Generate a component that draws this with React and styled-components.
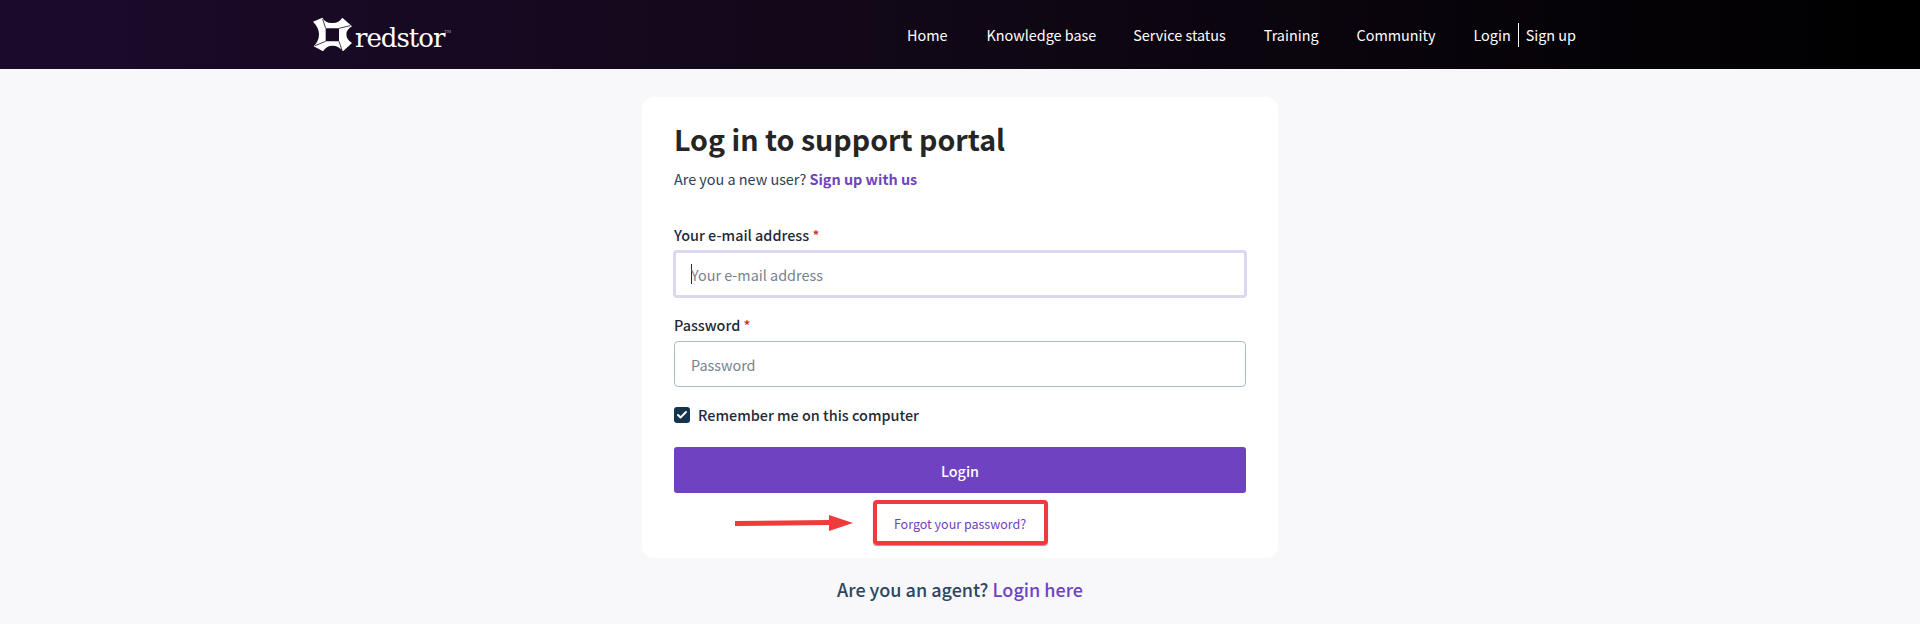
import React from "react";
import styled, { createGlobalStyle } from "styled-components";
import { Check } from "lucide-react";

const FONT = `"Noto Sans CJK SC", "Noto Sans", sans-serif`;

const Global = createGlobalStyle`
  html, body { margin: 0; padding: 0; background: #f8f8fb; }
  body { font-family: ${FONT}; height: 624px; overflow: hidden; }
  * { box-sizing: border-box; }
`;

const Header = styled.header`
  height: 69px;
  background: linear-gradient(90deg, #1c0a2c 0%, #120818 45%, #000 100%);
  display: flex;
  align-items: center;
  justify-content: space-between;
  padding: 0 344px 0 313px;
`;
const Logo = styled.div`
  display: flex;
  align-items: center;
  gap: 3px;
  color: #fff;
`;
const LogoText = styled.span`
  font-family: "DejaVu Serif", "Liberation Serif", serif;
  font-size: 26px;
  line-height: 36px;
  letter-spacing: -1px;
`;
const Trademark = styled.sup`
  font-size: 4px;
  letter-spacing: 0;
  color: #aaa;
  vertical-align: 14px;
`;
const Nav = styled.nav`
  display: flex;
  align-items: center;
  font-size: 14.4px;
  line-height: 24px;
  color: #fff;
`;
const NavLink = styled.a`
  margin-right: ${(p) => p.$gap}px;
`;
const NavRule = styled.span`
  width: 1px;
  height: 24px;
  background: #fff;
  margin: 0 7px;
`;

const Main = styled.main`
  display: flex;
  flex-direction: column;
  align-items: center;
  padding-top: 28px;
`;
const Card = styled.section`
  position: relative;
  width: 636px;
  height: 461px;
  background: #fff;
  border-radius: 12px;
  padding: 22px 32px 0;
`;
const Title = styled.h1`
  margin: 0;
  font-size: 28.6px;
  line-height: 40px;
  font-weight: 700;
  color: #252525;
`;
const Lead = styled.p`
  margin: 8px 0 0;
  font-size: 14.4px;
  line-height: 24px;
  color: #2d3f58;
`;
const Strong = styled.a`
  font-weight: 700;
  color: #6f42c1;
`;
const Field = styled.div`
  margin-top: ${(p) => p.$top}px;
`;
const Label = styled.label`
  display: block;
  font-size: 14.4px;
  line-height: 24px;
  font-weight: 500;
  color: #1f2a37;
  margin-bottom: 4px;
`;
const Star = styled.span`
  color: #d62828;
`;
const InputBox = styled.div`
  margin: ${(p) => (p.$focus ? "-1px -1px 0" : "0")};
  height: ${(p) => (p.$focus ? "48px" : "46px")};
  border-radius: 4px;
  background: #fff;
  border: ${(p) => (p.$focus ? "3px solid #dcd7f0" : "1px solid #adbccb")};
  display: flex;
  align-items: center;
  padding-left: ${(p) => (p.$focus ? "15px" : "16px")};
  font-size: 14.4px;
  color: #77828f;
`;
const Caret = styled.span`
  width: 1px;
  height: 20px;
  background: #12344d;
  margin-right: -1px;
`;
const CheckRow = styled.div`
  display: flex;
  align-items: center;
  gap: 8px;
  margin-top: 16px;
  font-size: 14.4px;
  line-height: 24px;
  font-weight: 500;
  color: #1f2a37;
`;
const CheckBox = styled.span`
  width: 16px;
  height: 16px;
  border-radius: 3px;
  background: #12344d;
  color: #fff;
  display: flex;
  align-items: center;
  justify-content: center;
`;
const Button = styled.button`
  display: block;
  width: 100%;
  height: 46px;
  margin-top: 20px;
  border: 0;
  border-radius: 3px;
  background: #6f42c1;
  color: #fff;
  font-family: ${FONT};
  font-size: 14.4px;
  font-weight: 500;
`;
const Forgot = styled.a`
  display: block;
  margin-top: 21px;
  text-align: center;
  font-size: 12.5px;
  line-height: 20px;
  color: #6f42c1;
`;
const RedBox = styled.div`
  position: absolute;
  left: 231px;
  top: 403px;
  width: 175px;
  height: 45px;
  border: 4px solid #ef3b3b;
  border-radius: 4px;
  box-shadow: 0 1px 1px rgba(0, 0, 0, 0.4);
`;
const Arrow = styled.svg`
  position: absolute;
  left: 93px;
  top: 418px;
`;
const Agent = styled.p`
  margin: 17px 0 0;
  font-size: 18px;
  line-height: 28px;
  font-weight: 500;
  color: #2d4660;
`;
const AgentLink = styled.a`
  color: #6f42c1;
`;

const LogoMark = () => (
  <svg width="39" height="35" viewBox="0 0 117 105">
    <path
      d="M0 14 L28 2 Q38 20 60 18 Q78 18 88 2 L117 28 Q100 38 100 52 Q100 68 117 78 L90 103 Q78 86 58 86 Q40 86 30 103 L2 88 Q18 72 18 52 Q18 32 0 14 Z M38 34 L38 73 L78 73 L78 34 Z"
      fill="#fff"
      fillRule="evenodd"
    />
    <path d="M38 34 L29 6 M78 34 L112 26 M78 73 L87 100 M38 73 L6 86" stroke="#1a0a28" strokeWidth="2.4" fill="none" />
  </svg>
);

const links = [
  ["Home", 39],
  ["Knowledge base", 37],
  ["Service status", 38],
  ["Training", 38],
  ["Community", 38],
];

export default function App() {
  return (
    <>
      <Global />
      <Header>
        <Logo>
          <LogoMark />
          <LogoText>redstor<Trademark>TM</Trademark></LogoText>
        </Logo>
        <Nav>
          {links.map(([t, g]) => (
            <NavLink key={t} $gap={g}>{t}</NavLink>
          ))}
          <span>Login</span>
          <NavRule />
          <span>Sign up</span>
        </Nav>
      </Header>
      <Main>
        <Card>
          <Title>Log in to support portal</Title>
          <Lead>
            Are you a new user? <Strong>Sign up with us</Strong>
          </Lead>
          <Field $top={32}>
            <Label>Your e-mail address <Star>*</Star></Label>
            <InputBox $focus><Caret />Your e-mail address</InputBox>
          </Field>
          <Field $top={15}>
            <Label>Password <Star>*</Star></Label>
            <InputBox>Password</InputBox>
          </Field>
          <CheckRow>
            <CheckBox><Check size={12} strokeWidth={4} /></CheckBox>
            Remember me on this computer
          </CheckRow>
          <Button>Login</Button>
          <Forgot>Forgot your password?</Forgot>
          <Arrow width="118" height="16" viewBox="0 0 118 16">
            <path d="M0 6 L94 5 L94 0 L118 8 L94 16 L94 10 L0 11 Z" fill="#ef3b3b" />
          </Arrow>
          <RedBox />
        </Card>
        <Agent>
          Are you an agent? <AgentLink>Login here</AgentLink>
        </Agent>
      </Main>
    </>
  );
}
